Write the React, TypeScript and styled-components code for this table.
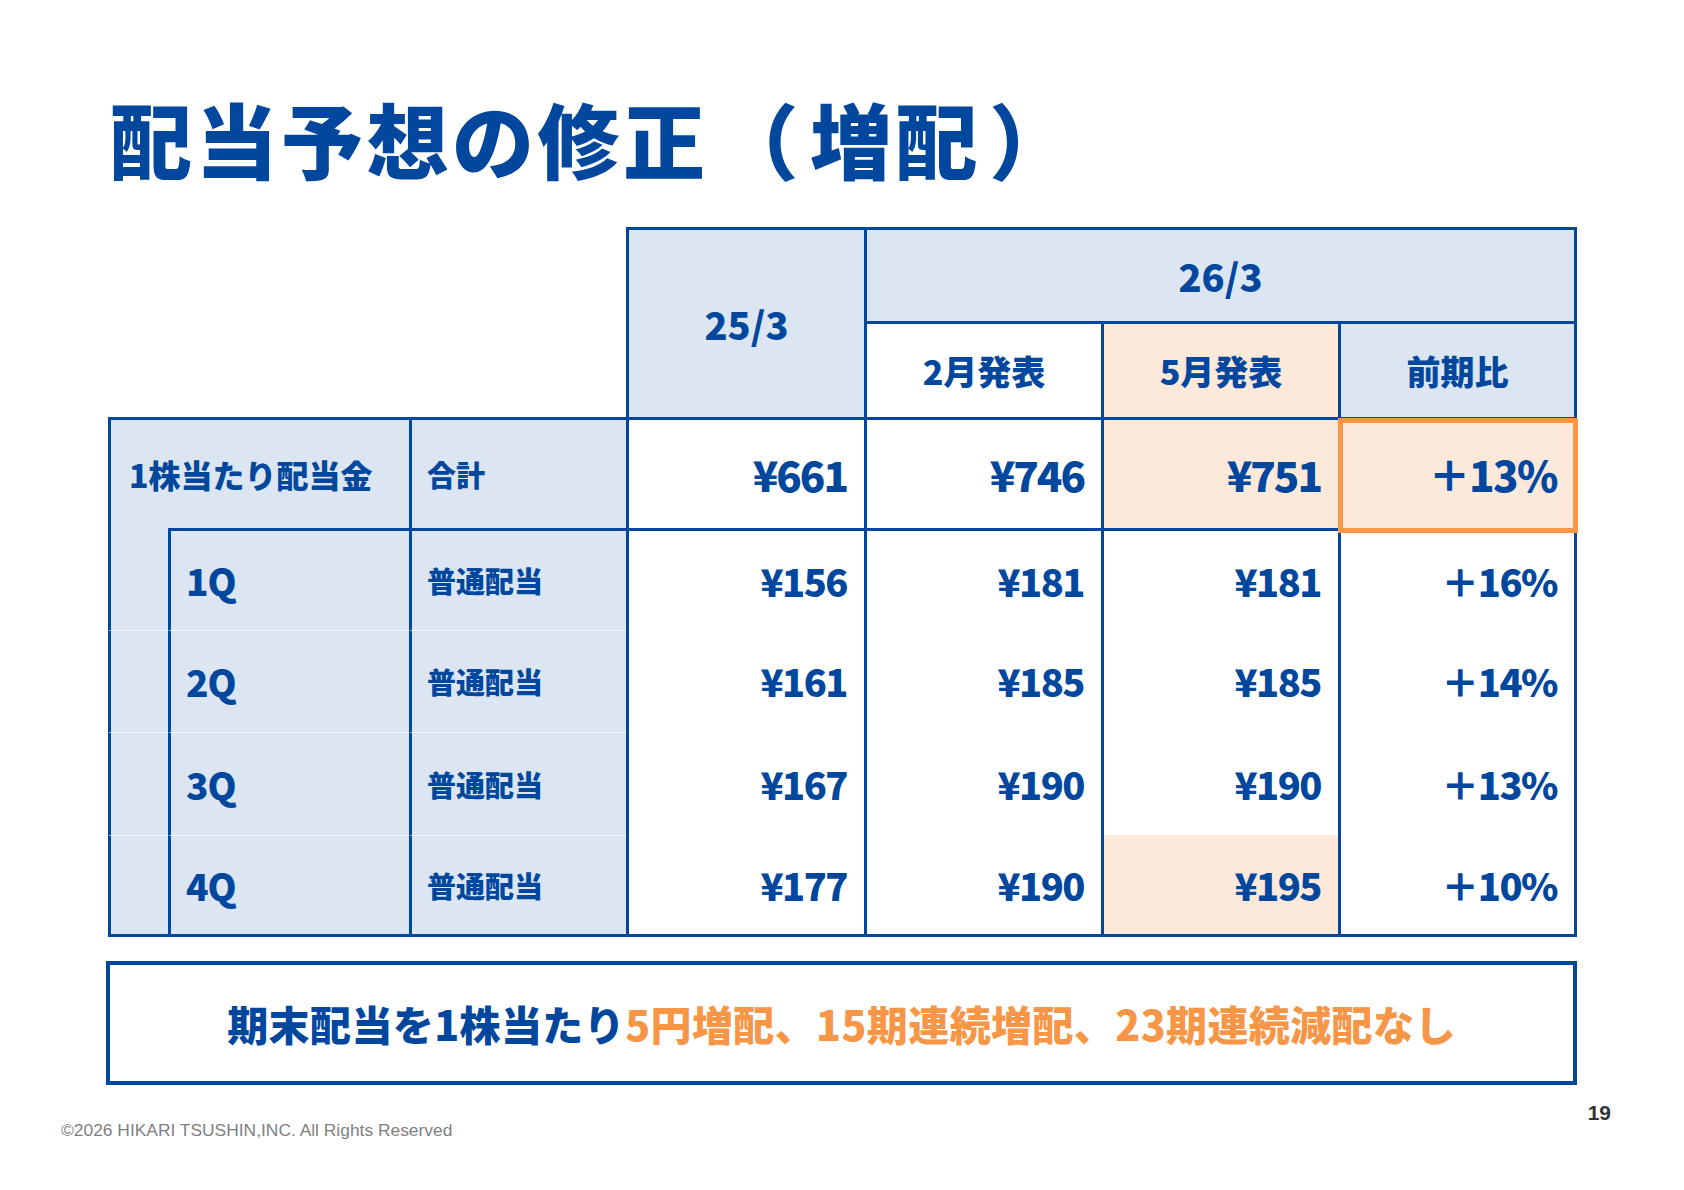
import React from 'react';
import styled, { createGlobalStyle, css } from 'styled-components';

const BLUE = '#00479d';
const LIGHT = '#dce6f2';
const PEACH = '#fde9d9';
const ORANGE = '#f79646';
const JP = `"Noto Sans CJK JP", "Noto Sans", sans-serif`;

const GlobalStyle = createGlobalStyle`
  html, body { margin: 0; padding: 0; background: #ffffff; }
  body { font-family: ${JP}; }
`;

const Slide = styled.div`
  width: 1684px;
  height: 1190px;
  box-sizing: border-box;
  padding-top: 97px;
  display: flex;
  flex-direction: column;
  background: #fff;
`;

const Main = styled.div`
  margin-left: 108px;
  width: 1469px;
  display: flex;
  flex-direction: column;
`;

const Title = styled.h1`
  margin: 0 0 0 2px;
  font-family: ${JP};
  font-size: 82px;
  line-height: 1;
  font-weight: 900;
  letter-spacing: 3.5px;
  color: ${BLUE};
  white-space: nowrap;
`;

const Paren = styled.span`
  margin: 0 8px;
`;

const Table = styled.div`
  margin-top: 48px;
  display: grid;
  grid-template-columns: 60px 241px 217px 238px 237px 237px 239px;
  grid-template-rows: 94px 96px 111px 102px 102px 103px 102px;
`;

type Line = 'blue' | 'faint' | 'none';
type Bg = 'blue' | 'peach' | 'white';

const line = (l?: Line) =>
  l === 'blue' ? `3px solid ${BLUE}` : l === 'faint' ? `1px solid rgba(255,255,255,0.6)` : 'none';

const bgColor = (b?: Bg) => (b === 'blue' ? LIGHT : b === 'peach' ? PEACH : '#ffffff');

interface CellProps {
  $bg?: Bg;
  $align?: 'left' | 'center' | 'right';
  $t?: Line;
  $l?: Line;
  $r?: Line;
  $b?: Line;
  $size?: number;
  $pad?: number;
  $colSpan?: number;
  $rowSpan?: number;
  $highlight?: boolean;
}

const Cell = styled.div<CellProps>`
  position: relative;
  box-sizing: border-box;
  display: flex;
  align-items: center;
  justify-content: ${p => (p.$align === 'left' ? 'flex-start' : p.$align === 'right' ? 'flex-end' : 'center')};
  padding: ${p => (p.$align === 'left' ? `0 0 0 ${p.$pad ?? 16}px` : p.$align === 'right' ? `0 ${p.$pad ?? 17}px 0 0` : '0')};
  background: ${p => bgColor(p.$bg)};
  border-top: ${p => line(p.$t)};
  border-left: ${p => line(p.$l)};
  border-right: ${p => line(p.$r)};
  border-bottom: ${p => line(p.$b)};
  grid-column: span ${p => p.$colSpan ?? 1};
  grid-row: span ${p => p.$rowSpan ?? 1};
  font-family: ${JP};
  font-weight: 900;
  font-size: ${p => p.$size ?? 30}px;
  line-height: 1;
  color: ${BLUE};
  white-space: nowrap;
  ${p =>
    p.$highlight &&
    css`
      z-index: 1;
      &::after {
        content: '';
        position: absolute;
        top: -2px;
        left: -3px;
        right: -4px;
        bottom: -5px;
        border: 5px solid ${ORANGE};
        pointer-events: none;
      }
    `}
`;

const Num = styled.span<{ $ls?: number }>`
  letter-spacing: ${p => p.$ls ?? 0}px;
`;

const Corner = styled.div`
  grid-column: span 3;
  grid-row: span 2;
`;

const Summary = styled.div`
  margin-top: 24px;
  margin-left: -2px;
  height: 124px;
  box-sizing: border-box;
  border: 4px solid ${BLUE};
  display: flex;
  align-items: center;
  justify-content: center;
  font-family: ${JP};
  font-weight: 900;
  font-size: 41px;
  letter-spacing: 0.4px;
  color: ${BLUE};
  white-space: nowrap;
`;

const Accent = styled.span`
  color: ${ORANGE};
`;

const Footer = styled.div`
  display: flex;
  justify-content: space-between;
  align-items: flex-start;
  padding: 0 73px 0 61px;
  margin-top: 16px;
`;

const Copyright = styled.div`
  margin-top: 19px;
  font-family: "Liberation Sans", Arial, sans-serif;
  font-size: 17.4px;
  color: #7f7f7f;
`;

const PageNo = styled.div`
  font-family: "Liberation Sans", Arial, sans-serif;
  font-weight: 700;
  font-size: 21px;
  color: #333333;
`;

const quarters = [
  { q: '1Q', v: ['¥156', '¥181', '¥181', '＋16%'] },
  { q: '2Q', v: ['¥161', '¥185', '¥185', '＋14%'] },
  { q: '3Q', v: ['¥167', '¥190', '¥190', '＋13%'] },
  { q: '4Q', v: ['¥177', '¥190', '¥195', '＋10%'] },
];

export default function App() {
  return (
    <>
      <GlobalStyle />
      <Slide>
        <Main>
          <Title>
            配当予想の修正<Paren>（</Paren>増配<Paren>）</Paren>
          </Title>
          <Table>
            <Corner />
            <Cell $bg="blue" $rowSpan={2} $t="blue" $l="blue" $size={38}>25/3</Cell>
            <Cell $bg="blue" $colSpan={3} $t="blue" $l="blue" $r="blue" $size={38}>26/3</Cell>
            <Cell $bg="white" $t="blue" $l="blue" $size={34}>2月発表</Cell>
            <Cell $bg="peach" $t="blue" $l="blue" $size={34}>5月発表</Cell>
            <Cell $bg="blue" $t="blue" $l="blue" $r="blue" $size={34}>前期比</Cell>

            <Cell $bg="blue" $colSpan={2} $t="blue" $l="blue" $align="left" $pad={18} $size={32}>1株当たり配当金</Cell>
            <Cell $bg="blue" $t="blue" $l="blue" $align="left" $pad={15} $size={29}>合計</Cell>
            <Cell $bg="white" $t="blue" $l="blue" $align="right" $size={42}><Num $ls={-2}>¥661</Num></Cell>
            <Cell $bg="white" $t="blue" $l="blue" $align="right" $size={42}><Num $ls={-2}>¥746</Num></Cell>
            <Cell $bg="peach" $t="blue" $l="blue" $align="right" $size={42}><Num $ls={-2}>¥751</Num></Cell>
            <Cell $bg="peach" $t="blue" $l="blue" $r="blue" $align="right" $pad={17} $size={42} $highlight><Num $ls={-1.5}>＋13%</Num></Cell>

            {quarters.map((row, i) => {
              const last = i === quarters.length - 1;
              const first = i === 0;
              const b: Line = last ? 'blue' : 'none';
              return (
                <React.Fragment key={row.q}>
                  <Cell $bg="blue" $l="blue" $t={first ? 'none' : 'faint'} $b={b} />
                  <Cell $bg="blue" $l="blue" $t={first ? 'blue' : 'faint'} $b={b} $align="left" $pad={15} $size={37}><Num $ls={-1}>{row.q}</Num></Cell>
                  <Cell $bg="blue" $l="blue" $t={first ? 'blue' : 'faint'} $b={b} $align="left" $pad={15} $size={29}>普通配当</Cell>
                  <Cell $bg="white" $l="blue" $t={first ? 'blue' : 'none'} $b={b} $align="right" $size={38}><Num $ls={-1.5}>{row.v[0]}</Num></Cell>
                  <Cell $bg="white" $l="blue" $t={first ? 'blue' : 'none'} $b={b} $align="right" $size={38}><Num $ls={-1.5}>{row.v[1]}</Num></Cell>
                  <Cell $bg={last ? 'peach' : 'white'} $l="blue" $t={first ? 'blue' : 'none'} $b={b} $align="right" $size={38}><Num $ls={-1.5}>{row.v[2]}</Num></Cell>
                  <Cell $bg="white" $l="blue" $r="blue" $t={first ? 'blue' : 'none'} $b={b} $align="right" $size={38}><Num $ls={-1.5}>{row.v[3]}</Num></Cell>
                </React.Fragment>
              );
            })}
          </Table>
          <Summary>
            期末配当を1株当たり<Accent>5円増配、15期連続増配、23期連続減配なし</Accent>
          </Summary>
        </Main>
        <Footer>
          <Copyright>©2026 HIKARI TSUSHIN,INC. All Rights Reserved</Copyright>
          <PageNo>19</PageNo>
        </Footer>
      </Slide>
    </>
  );
}
